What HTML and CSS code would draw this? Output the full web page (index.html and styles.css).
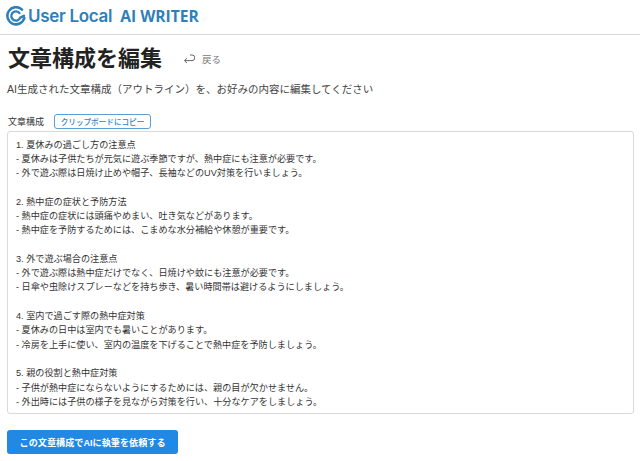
FILE: index.html
```html
<!DOCTYPE html>
<html lang="ja">
<head>
<meta charset="utf-8">
<title>文章構成を編集</title>
<link rel="stylesheet" href="styles.css">
</head>
<body>
<header class="site-header">
  <svg class="logo-mark" viewBox="0 0 20 20" width="20" height="20" aria-hidden="true">
    <path d="M16 3.6A8.6 8.6 0 1 0 18.3 12" fill="none" stroke="#2f7fb8" stroke-width="2.6" stroke-linecap="round"/>
    <path d="M13.4 7A4.6 4.6 0 1 0 14.2 11.6L18 9.8" fill="none" stroke="#2f7fb8" stroke-width="2.4" stroke-linecap="round" stroke-linejoin="round"/>
  </svg>
  <span class="logo-name">User Local</span>
  <span class="logo-product">AI WRITER</span>
</header>
<main class="page">
  <div class="title-row">
    <h1 class="title">文章構成を編集</h1>
    <a class="back">
      <svg class="back-icon" viewBox="0 0 12 10" width="12" height="10" aria-hidden="true">
        <path d="M7 1h2a2.8 2.8 0 0 1 0 5.6H1.5M4 4.2 1.5 6.6 4 9" fill="none" stroke="#666" stroke-width="1"/>
      </svg>
      <span>戻る</span>
    </a>
  </div>
  <p class="lead">AI生成された文章構成（アウトライン）を、お好みの内容に編集してください</p>
  <div class="label-row">
    <span class="label">文章構成</span>
    <button class="copy">クリップボードにコピー</button>
  </div>
  <div class="outline">
    <p>1. 夏休みの過ごし方の注意点<br>- 夏休みは子供たちが元気に遊ぶ季節ですが、熱中症にも注意が必要です。<br>- 外で遊ぶ際は日焼け止めや帽子、長袖などのUV対策を行いましょう。</p>
    <p>2. 熱中症の症状と予防方法<br>- 熱中症の症状には頭痛やめまい、吐き気などがあります。<br>- 熱中症を予防するためには、こまめな水分補給や休憩が重要です。</p>
    <p>3. 外で遊ぶ場合の注意点<br>- 外で遊ぶ際は熱中症だけでなく、日焼けや蚊にも注意が必要です。<br>- 日傘や虫除けスプレーなどを持ち歩き、暑い時間帯は避けるようにしましょう。</p>
    <p>4. 室内で過ごす際の熱中症対策<br>- 夏休みの日中は室内でも暑いことがあります。<br>- 冷房を上手に使い、室内の温度を下げることで熱中症を予防しましょう。</p>
    <p>5. 親の役割と熱中症対策<br>- 子供が熱中症にならないようにするためには、親の目が欠かせません。<br>- 外出時には子供の様子を見ながら対策を行い、十分なケアをしましょう。</p>
  </div>
  <button class="submit">この文章構成でAIに執筆を依頼する</button>
</main>
</body>
</html>
```
FILE: styles.css
```css
* { box-sizing: border-box; }
html, body { margin: 0; padding: 0; }
body {
  background: #fff;
  color: #333;
  font-family: "Liberation Sans", "Noto Sans CJK JP", sans-serif;
  height: 461px;
  overflow: hidden;
}
.site-header {
  height: 35px;
  border-bottom: 1px solid #d9d9d9;
  display: flex;
  align-items: center;
  padding: 0 0 3px 6px;
}
.logo-mark { flex: none; margin-right: 2px; }
.logo-name {
  font-family: Inter, sans-serif;
  font-size: 17px;
  font-weight: 600;
  letter-spacing: -0.3px;
  color: #2f7fb8;
  margin-right: 8px;
}
.logo-product {
  font-family: "Open Sans", sans-serif;
  font-size: 15.6px;
  font-weight: 700;
  color: #2f7fb8;
}
.page { padding: 0 6px 0 7px; }
.title-row {
  display: flex;
  align-items: center;
  height: 47px;
  padding: 1px 0 0 1px;
}
.title {
  margin: 0;
  font-size: 22px;
  font-weight: 700;
  color: #222;
  line-height: 1;
}
.back {
  display: flex;
  align-items: center;
  gap: 7px;
  margin-left: 21px;
  font-size: 9.5px;
  color: #777;
}
.lead {
  margin: 0;
  font-size: 10.5px;
  line-height: 14px;
  height: 30px;
  color: #444;
}
.label-row {
  display: flex;
  align-items: center;
  height: 19px;
  padding-bottom: 1px;
}
.label { font-size: 9px; width: 47px; padding-left: 1px; }
.copy {
  height: 15px;
  width: 97px;
  padding: 0;
  border: 1px solid #5a9fd8;
  border-radius: 3px;
  background: #fff;
  color: #2f82c8;
  font-family: inherit;
  font-size: 7.6px;
  font-weight: 500;
}
.outline {
  height: 283px;
  border: 1px solid #d9d9d9;
  border-radius: 3px;
  padding: 5.5px 8px;
  font-size: 9.15px;
  line-height: 14.3px;
  color: #333;
}
.outline p { margin: 0 0 14.3px; }
.submit {
  display: block;
  margin-top: 16px;
  width: 171px;
  height: 24px;
  padding: 0;
  border: 0;
  border-radius: 3px;
  background: #2188e3;
  color: #fff;
  font-family: inherit;
  font-size: 9.15px;
  font-weight: 700;
}
```
